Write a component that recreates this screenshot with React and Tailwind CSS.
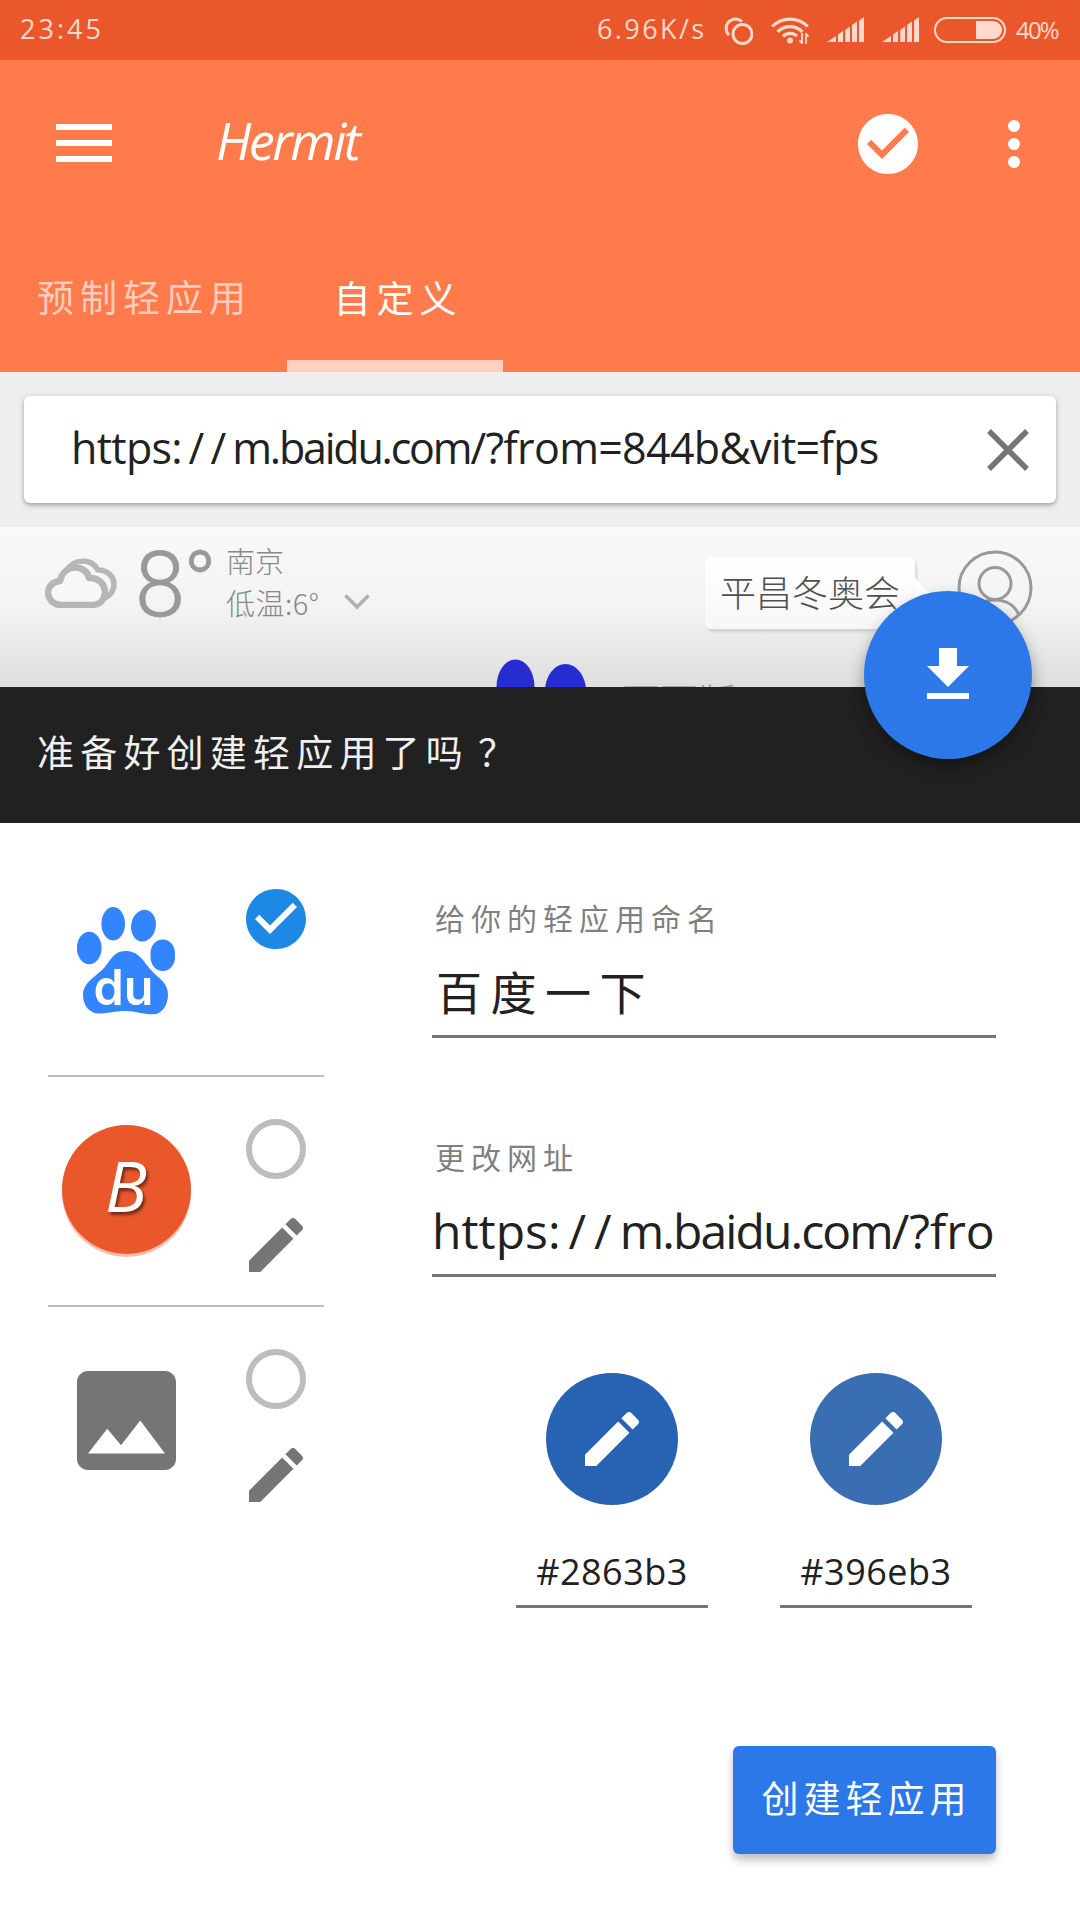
const EDIT = "M3 17.25V21h3.75L17.81 9.94l-3.75-3.75L3 17.25zM20.71 7.04c.39-.39.39-1.02 0-1.41l-2.34-2.34c-.39-.39-1.02-.39-1.41 0l-1.83 1.83 3.75 3.75 1.83-1.83z";
const CHECK = "M12 2C6.48 2 2 6.48 2 12s4.48 10 10 10 10-4.48 10-10S17.52 2 12 2zm-2 15l-5-5 1.41-1.41L10 14.17l7.59-7.59L19 8l-9 9z";

const Pencil = ({ className }) => (
  <svg viewBox="3 3 18 18" className={`size-[54px] shrink-0 ${className}`} fill="currentColor"><path d={EDIT} /></svg>
);

const CheckCircle = ({ className }) => (
  <svg viewBox="2 2 20 20" className={`size-[60px] shrink-0 ${className}`} fill="currentColor"><path d={CHECK} /></svg>
);

const Signal = ({ className }) => (
  <svg viewBox="0 0 37 25" className={`w-[37px] h-[25px] ${className}`} fill="currentColor">
    <path d="M0 25 9 19V25zM11 17.5 16 14V25H11zM18.300 13 23 9.500V25H18.300zM25 8 30 4.500V25H25zM32 3.500 37 0V25H32z" />
  </svg>
);

const StatusBar = () => (
  <div className="h-[60px] bg-[#e9572b] text-[#ffd9cc] flex items-center pb-[1px] pl-5 text-[27px]">
    <span className="w-[577px] tracking-[3px]">23:45</span>
    <span className="w-[126px] tracking-[2.4px] whitespace-nowrap">6.96K/s</span>
    <svg viewBox="0 0 30 30" className="size-[30px]" fill="none" stroke="currentColor" strokeWidth="3">
      <circle cx="19.500" cy="19" r="9.500" />
      <path d="M6 20A9 9 0 1 1 19 6.500" />
    </svg>
    <svg viewBox="0 0 38 28" className="w-[38px] h-7 ml-[18px]" fill="none" stroke="currentColor" strokeWidth="3.200">
      <path d="M1.200 10.500a25 25 0 0 1 35.600 0M6.500 15.800a17.500 17.500 0 0 1 25 0M12 20.500a10 10 0 0 1 14-.5" />
      <circle cx="19" cy="24.500" r="3" fill="currentColor" stroke="none" />
      <path d="M31 17v11M28.500 24.500 31 27M35 28V17M37.500 20.500 35 18" strokeWidth="1.800" />
    </svg>
    <Signal className="ml-[18px]" />
    <Signal className="ml-[18px]" />
    <div className="ml-[15px] w-[72px] h-[26px] rounded-full border-2 border-current flex items-center justify-end pr-[2px]">
      <div className="w-[26px] h-[18px] bg-current rounded-r-full" />
    </div>
    <span className="ml-[10px] text-[24px] tracking-[-1.8px]">40%</span>
  </div>
);

const Header = () => (
  <header className="h-[312px] bg-[#ff7b4b] text-white flex flex-col">
    <div className="h-[168px] flex items-center pl-14">
      <div className="w-14 pb-[2px] flex flex-col gap-[10px]">
        <div className="h-[6px] bg-white" />
        <div className="h-[6px] bg-white" />
        <div className="h-[6px] bg-white" />
      </div>
      <h1 className="ml-[104px] w-[642px] pb-[8px] text-[52px] italic leading-none tracking-[-2.5px]">Hermit</h1>
      <CheckCircle />
      <div className="ml-[90px] flex flex-col gap-[6px]">
        <div className="size-3 rounded-full bg-white" />
        <div className="size-3 rounded-full bg-white" />
        <div className="size-3 rounded-full bg-white" />
      </div>
    </div>
    <nav className="h-[144px] flex text-[37px] tracking-[6px]">
      <div className="w-[287px] pl-[37px] flex items-center pb-1 text-[#ffcdbb]">预制轻应用</div>
      <div className="w-[216px] pt-[9px] border-b-12 border-[#ffd0c0] flex items-center justify-center pl-[6px]">自定义</div>
    </nav>
  </header>
);

const SearchBar = () => (
  <div className="h-[155px] bg-[#eee] px-6 pt-6">
    <div className="h-[107px] bg-white rounded-md shadow-[0_2px_5px_rgba(0,0,0,0.35)] flex items-center justify-between pl-[47px] pr-[27px]">
      <div className="text-[43px] leading-none pb-1 text-[#212121] tracking-[-0.700px] whitespace-nowrap">
        https<span className="tracking-[6px]">://</span><span className="tracking-[-2.200px]">m.baidu.com</span>/?from=844b&amp;vit=fps
      </div>
      <svg viewBox="0 0 42 42" className="size-[42px]" stroke="#757575" strokeWidth="5.500"><path d="M2 2 40 40M40 2 2 40" /></svg>
    </div>
  </div>
);

const WebPreview = () => (
  <div className="relative h-[160px] overflow-hidden bg-linear-to-b from-[#f9f9f9] via-[#f3f3f3] to-[#dedede] font-['Noto_Sans_CJK_SC',sans-serif] font-light text-[#999]">
    <div className="flex pl-[45px] pt-4">
      <svg viewBox="0 0 72 50" className="w-[72px] h-[50px] mt-[15px]" fill="none" stroke="#b4b6b7" strokeWidth="6.500" strokeLinejoin="round">
        <path d="M21 13C29 0 46 0 53 12C64 12 69 20 69 26C69 33 66 37 60 40" strokeWidth="5.500" />
        <path d="M16 47C-1 46-1 24 15 23C19 5 41 6 44 20C63 19 66 45 48 47Z" fill="#f8f8f8" />
      </svg>
      <span className="ml-[18px] w-[89px] pt-[3px] text-[90px] leading-[80px] tracking-[-2px] font-['Roboto',sans-serif] [-webkit-text-stroke:0.8px_#999]">8°</span>
      <div className="ml-[2px] -mt-1 text-[29px] leading-[42px] text-[#888]">
        <div className="h-[42px]">南京</div>
        <div className="whitespace-nowrap flex items-center">
          <span className="w-[118px] tracking-[0.5px]">低温:6°</span>
          <svg viewBox="0 0 26 16" className="w-[26px] h-4" fill="none" stroke="#b0b0b0" strokeWidth="3.500"><path d="M1.500 1.500 13 13 24.500 1.500" /></svg>
        </div>
      </div>
    </div>
    <div className="absolute left-[705px] top-[30px] w-[210px] h-[72px] rounded-md bg-linear-to-b from-white to-[#f7f7f7] shadow-[2px_3px_3px_rgba(0,0,0,0.12)] flex items-center pl-[15px] pb-[5px] text-[36px] text-[#505050] whitespace-nowrap">平昌冬奥会</div>
    <svg viewBox="0 0 16 22" className="absolute left-[915px] top-[51px] w-4 h-[22px]" fill="#fff"><path d="M0 0 15 15 0 22z" /></svg>
    <svg viewBox="0 0 76 76" className="absolute left-[956.500px] top-[23px] size-[76px]" fill="none" stroke="#999" strokeWidth="3">
      <circle cx="38" cy="38" r="36" />
      <circle cx="38" cy="33.500" r="16" />
      <path d="M14 65C18 56 26 50 38 50S58 56 62 65" />
    </svg>
    <svg viewBox="0 0 90 30" className="absolute left-[496px] top-[130px] w-[90px] h-[30px]" fill="#262cd0">
      <ellipse cx="19.500" cy="30" rx="19" ry="27.500" />
      <ellipse cx="69.500" cy="34" rx="20.500" ry="27" />
    </svg>
    <div className="absolute left-[622px] top-[153px] text-[38px] leading-[40px] text-[#999]">百百版</div>
  </div>
);

const Paw = () => (
  <svg viewBox="77 47 98 108" className="w-[98px] h-[108px]" fill="#3385ff">
    <ellipse cx="89.200" cy="88" rx="12.400" ry="16.200" />
    <ellipse cx="113.200" cy="63.700" rx="11.800" ry="16.700" />
    <ellipse cx="143.500" cy="65.700" rx="12.300" ry="16" transform="rotate(10 143.500 65.700)" />
    <rect x="150.500" y="79.500" width="24.500" height="31.500" rx="12" ry="14" />
    <path d="M125.500 91C113 91 110 102 103 109C95 117 83 123 83 135C83 146 90 153.500 99 153.500C108 153.500 115 151 125.500 151C136 151 142 154.300 153 154.300C162 154.300 168 145 168 135C168 122 159 119 151 110C143 101 139 91 125.500 91Z" />
    <text x="93.500" y="144.500" textLength="60" lengthAdjust="spacingAndGlyphs" fill="#fff" fontFamily="'Inter', sans-serif" fontSize="50" fontWeight="600">du</text>
  </svg>
);

const IconRow = ({ children, checked, last }) => (
  <div className={`h-[230px] flex ${last ? "" : "border-b-2 border-[#bdbdbd]"}`}>
    <div className="w-[156px] flex justify-center">{children}</div>
    <div className="ml-[42px] pt-[42px] w-[60px] flex flex-col items-center gap-[39px]">
      {checked ? <CheckCircle className="text-[#1e88e5]" /> : <div className="size-[60px] rounded-full border-6 border-[#bdbdbd]" />}
      {!checked && <Pencil className="text-[#757575]" />}
    </div>
  </div>
);

const Swatch = ({ circle, hex }) => (
  <div className="w-[192px] flex flex-col items-center">
    <div className={`size-[132px] rounded-full flex items-center justify-center text-white ${circle}`}><Pencil /></div>
    <div className="mt-[34px] h-[69px] w-full border-b-3 border-[#757575] text-center leading-[66px] text-[36px] tracking-[0.5px]">{hex}</div>
  </div>
);

export default function App() {
  return (
    <div className="w-[1080px] h-[1920px] overflow-hidden bg-white font-['Open_Sans','Noto_Sans_CJK_SC',sans-serif] font-normal">
      <StatusBar />
      <Header />
      <SearchBar />
      <WebPreview />
      <div className="relative h-[136px] bg-[#212121] text-[#f0f0f0] pl-[37px] pb-[5px] flex items-center text-[37px] tracking-[6.200px]">
        准备好创建轻应用了吗<span className="pl-[9px]">？</span>
        <div className="absolute left-[864px] -top-24 size-[168px] rounded-full bg-[#2c78e8] shadow-[0_8px_16px_rgba(0,0,0,0.35)] flex items-center justify-center">
          <svg viewBox="0 0 24 24" className="size-[72px]" fill="#fff"><path d="M19 9h-4V3H9v6H5l7 7 7-7zM5 18v2h14v-2H5z" /></svg>
        </div>
      </div>
      <main className="flex pl-12 pt-6 text-[#212121]">
        <aside className="w-[276px]">
          <IconRow checked><div className="pt-[60px] pr-px"><Paw /></div></IconRow>
          <IconRow>
            <div className="mt-12 pb-2 size-[129px] rounded-full bg-[#e9572b] shadow-[0_3px_0_#f8bcaa] flex items-center justify-center text-white text-[70px] italic [text-shadow:2px_3px_3px_rgba(0,0,0,0.5)]">B</div>
          </IconRow>
          <IconRow last>
            <svg viewBox="3 3 18 18" className="mt-[64px] size-[99px]" fill="#757575">
              <path d="M21 19V5c0-1.100-.9-2-2-2H5c-1.100 0-2 .9-2 2v14c0 1.100.9 2 2 2h14c1.100 0 2-.9 2-2zM8.500 13.500l2.500 3.010L14.500 12l4.500 6H5l3.500-4.500z" />
            </svg>
          </IconRow>
        </aside>
        <section className="ml-[108px] w-[564px] flex flex-col">
          <label className="mt-[50px] pl-[3px] h-[44px] leading-[44px] text-[30px] tracking-[6px] text-[#808080]">给你的轻应用命名</label>
          <div className="h-[97px] pl-1 border-b-3 border-[#757575] text-[46px] leading-[102px] tracking-[8.500px]">百度一下</div>
          <label className="mt-[98px] pl-[3px] h-[44px] leading-[44px] text-[30px] tracking-[6px] text-[#808080]">更改网址</label>
          <div className="h-[97px] border-b-3 border-[#757575] text-[48px] leading-[102px] whitespace-nowrap">
            https<span className="tracking-[8px]">://</span><span className="tracking-[-1.900px]">m.baidu.com</span>/?fro
          </div>
          <div className="mt-24 pl-[84px] flex gap-[72px]">
            <Swatch circle="bg-[#2863b3]" hex="#2863b3" />
            <Swatch circle="bg-[#396eb3]" hex="#396eb3" />
          </div>
          <button className="mt-[138px] self-end w-[263px] h-[108px] rounded-md bg-[#2c78e8] text-white text-[37px] tracking-[5px] pl-[4px] pb-[3px] shadow-[0_6px_8px_rgba(0,0,0,0.25)]">创建轻应用</button>
        </section>
      </main>
    </div>
  );
}
